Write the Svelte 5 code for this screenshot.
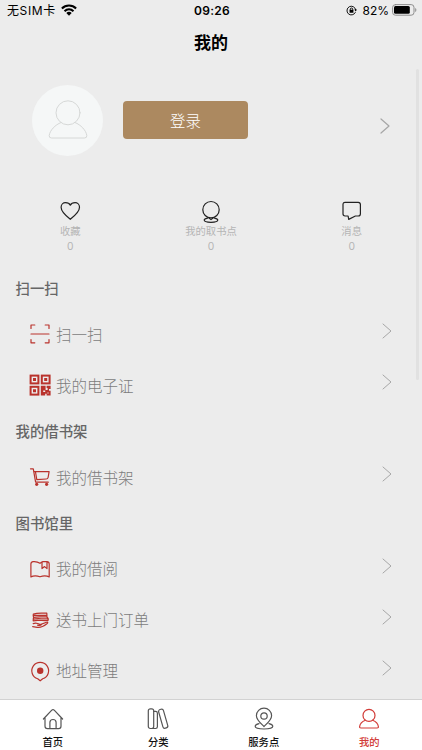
<script>
  const stats = [
    { icon: "heart", label: "收藏", count: 0 },
    { icon: "pickup", label: "我的取书点", count: 0 },
    { icon: "message", label: "消息", count: 0 },
  ];

  const sections = [
    {
      title: "扫一扫",
      rows: [
        { icon: "scan", label: "扫一扫" },
        { icon: "qrcode", label: "我的电子证" },
      ],
    },
    { title: "我的借书架", rows: [{ icon: "cart", label: "我的借书架" }] },
    {
      title: "图书馆里",
      rows: [
        { icon: "book", label: "我的借阅" },
        { icon: "delivery", label: "送书上门订单" },
        { icon: "address", label: "地址管理" },
      ],
    },
  ];

  const tabs = [
    { icon: "home", label: "首页" },
    { icon: "category", label: "分类" },
    { icon: "place", label: "服务点" },
    { icon: "user", label: "我的" },
  ];

  let activeTab = $state("user");
</script>

{#snippet icon(name)}
  <svg class="icon" viewBox="0 0 24 24" aria-hidden="true">
    {#if name === "heart"}
      <path
        d="M12.3 20.3C7.8 16.8 3.1 12.8 3.1 8.3C3.1 5.4 5.2 3.7 7.5 3.7C9.8 3.7 11.5 4.6 12.3 6.2C13.1 4.6 14.8 3.7 17.1 3.7C19.4 3.7 21.5 5.4 21.5 8.3C21.5 12.8 16.8 16.8 12.3 20.3Z"
      />
    {:else if name === "pickup"}
      <circle cx="12" cy="10.7" r="8.2" />
      <path d="M9.7 18.7L12 20.6L14.3 18.7" />
      <path
        d="M8.5 19.1C6.5 19.5 5.2 20.2 5.2 21.1C5.2 22.4 8 23.3 12 23.3S18.8 22.4 18.8 21.1C18.8 20.2 17.5 19.5 15.5 19.1"
      />
    {:else if name === "message"}
      <path
        d="M5.1 3.3H18.2Q20.4 3.3 20.4 5.6V14.7Q20.4 17 18.2 17H15.4L8.7 20.4L8.1 17H5.1Q3 17 3 14.7V5.6Q3 3.3 5.1 3.3Z"
      />
    {:else if name === "scan"}
      <path
        d="M3 6.5V3H6.8M17.2 3H21V6.5M21 17.5V20.8H17.2M6.8 20.8H3V17.5M3 12H21"
      />
    {:else if name === "qrcode"}
      <g stroke-width="2" stroke-linejoin="miter">
        <rect x="2.6" y="2.6" width="7.8" height="7.8" />
        <rect x="13.8" y="2.6" width="7.8" height="7.8" />
        <rect x="2.6" y="13.8" width="7.8" height="7.8" />
      </g>
      <path
        class="solid"
        d="M5 5h3v3h-3zM16.2 5h3v3h-3zM5 16.2h3v3h-3zM12.8 12.8h4.8v4.2h2v-2h-1v-2.2h4v3.2h-1.6v1.8h1.6v4.8h-4v-1.8h-1.4v1.8h-4.4zM15.2 19h2v-1.4h-2zM19.4 19.4h1.2v1.2h-1.2z"
        fill-rule="evenodd"
      />
    {:else if name === "cart"}
      <path d="M2.5 3.8H5.3L7.6 17.2H20.3" />
      <path d="M6.2 6.6H21.1L20.1 12.5Q19.8 14 18.3 14L8.8 14.6L7.5 7" />
      <circle class="solid" cx="8.7" cy="19.3" r="1.6" />
      <circle class="solid" cx="18.6" cy="19.3" r="1.6" />
    {:else if name === "book"}
      <path
        d="M12 6.3C9.8 4.7 7.5 4.4 5.2 4.6C3.7 4.8 2.9 5.5 2.9 7V19.9C5.9 18.5 8.9 18.7 12 19.8C15.1 18.7 18.1 18.5 21.2 19.9V7C21.2 5.2 20.2 4.6 18.8 4.6H15C13.8 4.9 12.9 5.4 12 6.3ZM14 4.8V11.6L16.6 9.6L19 11.6V4.7"
      />
    {:else if name === "delivery"}
      <path
        d="M18.8 5.2C13.5 5.2 9.5 4.6 5.3 6.1C5 7.6 5.2 8.5 5.7 9.4C10 8.3 14.5 9.3 19 8.8ZM18.5 8.8C20.3 10 20.6 11.2 20 12.5C15.5 13.2 9.8 11.5 5.2 12.8L5.4 9.8M5.2 11.2C10 10 14 11.2 19.7 10.9M5.2 15.6C8 14.5 9.8 15.2 12.2 16.6L18.5 14.2C20 13.5 20.2 14.7 18.9 15.8C15.8 18.2 12.5 20 9.2 19.3L4.7 18.7M9.5 17.1C11 17.4 13 17.4 13.5 16.4M6.3 7.4H18"
      />
    {:else if name === "address"}
      <path d="M9.7 19.8A8.4 8.4 0 1 1 14.7 19.8L12.2 21.8Z" />
      <circle class="solid" cx="12.2" cy="11.8" r="3.2" />
    {:else if name === "home"}
      <path
        d="M2.4 12L10.8 3.2Q12 2 13.2 3.2L21.6 12M4 10.7V19.3Q4 21.7 6.4 21.7H17.6Q20 21.7 20 19.3V10.7M8.9 21.6V15.4Q8.9 12.5 12 12.5T15.1 15.4V21.6"
      />
    {:else if name === "category"}
      <rect x="2.3" y="1.8" width="5.4" height="19.7" rx="2" />
      <path d="M7.7 4.4H9.6Q11.4 4.4 11.4 6.2V19.8Q11.4 21.5 9.6 21.5H6" />
      <rect
        x="14.7"
        y="2"
        width="5"
        height="19.4"
        rx="2"
        transform="rotate(-16 17.2 11.7)"
      />
    {:else if name === "place"}
      <path
        d="M12 19.5C8.1 15.7 4.4 12.7 4.4 8.7A7.6 7.6 0 0 1 19.6 8.7C19.6 12.7 15.9 15.7 12 19.5Z"
      />
      <circle cx="12" cy="9" r="3.2" />
      <path
        d="M7 16.6C4.4 17.2 3.2 18.1 3.2 19.3C3.2 21.1 7 22 12 22S20.8 21.1 20.8 19.3C20.8 18.1 19.6 17.2 17 16.6"
      />
    {:else if name === "user"}
      <circle cx="12" cy="8.4" r="6" />
      <path
        d="M8.4 13.3C5.6 14.4 2.9 17.2 2.6 19.8Q2.5 21 3.8 21H20.2Q21.5 21 21.4 19.8C21.1 17.2 18.4 14.4 15.6 13.3"
      />
    {/if}
  </svg>
{/snippet}

{#snippet chevron()}
  <svg class="chevron" viewBox="0 0 10 16" aria-hidden="true">
    <path d="M1 1L9 8L1 15" />
  </svg>
{/snippet}

<main>
  <header>
    <div class="status">
      <div class="status__side">
        <span class="carrier">无SIM卡</span>
        <svg class="wifi" viewBox="0 0 16 12" aria-hidden="true">
          <path d="M.9 4.4C4.8 .6 11.2 .6 15.1 4.4M3.5 7.2C6.1 4.8 9.9 4.8 12.5 7.2" />
          <path class="solid" d="M5.3 8.9Q8 6.8 10.7 8.9L8 11.7Z" />
        </svg>
      </div>
      <strong class="clock">09:26</strong>
      <div class="status__side status__side--right">
        <svg class="lock" viewBox="0 0 12 12" aria-hidden="true">
          <path d="M10.2 8.2A4.8 4.8 0 1 1 10.6 5.2" />
          <path class="solid" d="M9 5H12L10.5 7.2ZM3.9 5.3H8.1V8.5H3.9Z" />
          <path d="M4.7 5.5V4.6A1.3 1.3 0 0 1 7.3 4.6V5.5" />
        </svg>
        <span class="percent">82%</span>
        <svg class="battery" viewBox="0 0 25 12" aria-hidden="true">
          <rect class="shell" x=".6" y=".6" width="21.4" height="10.6" rx="2.8" />
          <rect class="solid" x="2" y="2" width="15.8" height="7.8" rx="1.5" />
          <path class="cap" d="M23.2 4V8Q24.4 7.4 24.4 6T23.2 4Z" />
        </svg>
      </div>
    </div>
    <h1>我的</h1>
  </header>

  <div class="content">
    <section class="profile">
      <div class="avatar">{@render icon("user")}</div>
      <button class="login">登录</button>
      {@render chevron()}
    </section>

    <section class="stats">
      {#each stats as stat}
        <div class="stat">
          {@render icon(stat.icon)}
          <span>{stat.label}</span>
          <span>{stat.count}</span>
        </div>
      {/each}
    </section>

    {#each sections as section}
      <section>
        <h2>{section.title}</h2>
        {#each section.rows as row}
          <div class="row">
            {@render icon(row.icon)}
            <span class="row__label">{row.label}</span>
            {@render chevron()}
          </div>
        {/each}
      </section>
    {/each}
    <div class="scrollbar"></div>
  </div>

  <nav>
    {#each tabs as tab}
      <button
        class="tab"
        class:active={activeTab === tab.icon}
        onclick={() => (activeTab = tab.icon)}
      >
        {@render icon(tab.icon)}
        <span>{tab.label}</span>
      </button>
    {/each}
  </nav>
</main>

<style>
  :global(body) {
    margin: 0;
  }

  main {
    display: flex;
    flex-direction: column;
    height: 750px;
    overflow: hidden;
    background: #ececec;
    color: #000;
    font-family: Inter, "Noto Sans CJK SC", sans-serif;
  }

  button {
    border: 0;
    padding: 0;
    font-family: inherit;
  }

  svg {
    display: block;
    flex: none;
    fill: none;
    stroke: currentColor;
    stroke-linecap: round;
    stroke-linejoin: round;
  }

  .icon {
    width: 24px;
    height: 24px;
    stroke-width: 1.2;
  }

  .solid {
    fill: currentColor;
    stroke: none;
  }

  header {
    flex: none;
    height: 64px;
  }

  .status {
    display: grid;
    grid-template-columns: 1fr auto 1fr;
    align-items: center;
    height: 21px;
    padding: 0 5px 0 7px;
    font-size: 12px;
    line-height: 21px;
  }

  .status__side {
    display: flex;
    align-items: center;
  }

  .status__side--right {
    justify-content: flex-end;
  }

  .carrier {
    letter-spacing: 0.6px;
  }

  .wifi {
    width: 16px;
    height: 12px;
    margin-bottom: 1px;
    margin-left: 5px;
    stroke-width: 2.1;
    stroke-linecap: butt;
  }

  .clock {
    font-size: 12px;
    font-weight: 600;
    letter-spacing: 0.3px;
  }

  .lock {
    width: 11px;
    height: 11px;
    margin-right: 5px;
  }

  .percent {
    margin-right: 3px;
  }

  .battery {
    width: 25px;
    height: 12px;
    margin-bottom: 1px;
  }

  .shell {
    stroke: #8d8d8d;
  }

  .cap {
    fill: #8d8d8d;
    stroke: none;
  }

  h1 {
    margin: 0;
    font-size: 17px;
    font-weight: 600;
    line-height: 45px;
    text-align: center;
  }

  .content {
    position: relative;
    flex: 1;
    min-height: 0;
    overflow: hidden;
  }

  .profile {
    display: flex;
    align-items: center;
    height: 112px;
    padding: 0 32px;
  }

  .avatar {
    display: flex;
    align-items: center;
    justify-content: center;
    width: 71px;
    height: 71px;
    margin-right: 20px;
    border-radius: 50%;
    background: #f5f7f7;
    color: #d6d8d7;
  }

  .avatar .icon {
    width: 48px;
    height: 48px;
    stroke-width: 0.5;
  }

  .login {
    width: 125px;
    height: 38px;
    border-radius: 4px;
    background: #ac8960;
    color: #fff;
    font-size: 15.4px;
    font-weight: 300;
  }

  .chevron {
    width: 10px;
    height: 16px;
    margin-left: auto;
    color: #a6a6a6;
  }

  .profile .chevron {
    position: relative;
    top: 6px;
    stroke-width: 1.2;
  }

  .stats {
    display: grid;
    grid-template-columns: repeat(3, 1fr);
    height: 92px;
    box-sizing: border-box;
    padding-top: 23px;
  }

  .stat {
    display: flex;
    flex-direction: column;
    align-items: center;
    color: #b5b5b5;
    font-size: 10.3px;
    line-height: 14.5px;
  }

  .stat .icon {
    margin-bottom: 1px;
    color: #222;
  }

  h2 {
    margin: 0;
    padding: 1px 0 0 15.5px;
    color: #666;
    font-size: 14.4px;
    font-weight: 500;
    line-height: 39.8px;
  }

  .row {
    display: flex;
    align-items: center;
    height: 51px;
    padding: 0 30px 0 28px;
    color: #b9322c;
  }

  .row__label {
    margin: 0 0 1px 4px;
    color: #7c7c7c;
    font-size: 15.5px;
    font-weight: 300;
  }

  .row .chevron {
    margin-bottom: 6px;
  }

  .scrollbar {
    position: absolute;
    top: 5px;
    right: 3px;
    width: 3px;
    height: 311px;
    border-radius: 2px;
    background: #e1e1e1;
  }

  nav {
    display: grid;
    grid-template-columns: repeat(4, 1fr);
    flex: none;
    height: 51px;
    box-sizing: border-box;
    border-top: 1px solid #d2d2d2;
    background: #fff;
  }

  .tab {
    display: flex;
    flex-direction: column;
    align-items: center;
    padding-top: 7px;
    background: none;
    color: #111;
    font-size: 10.3px;
    font-weight: 500;
    line-height: 22px;
  }

  .tab .icon {
    color: #555;
  }

  .tab.active,
  .tab.active .icon {
    color: #d23c38;
  }
</style>
